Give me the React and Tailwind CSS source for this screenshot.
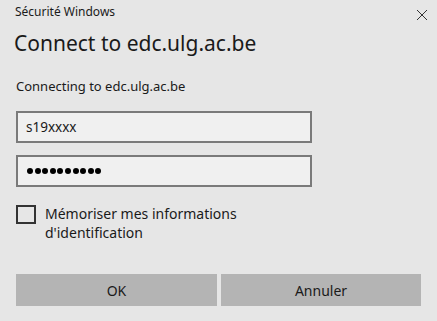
export default function App() {
  return (
    <div
      className="w-[437px] h-[321px] bg-[#e6e6e6] text-[#1a1a1a] overflow-hidden"
      style={{ fontFamily: '"Noto Sans", "Open Sans", sans-serif' }}
    >
      {/* title bar */}
      <div className="flex items-start justify-between pl-[15px] pr-[8px] pt-[3px]">
        <span className="text-[12px] leading-[18px]">Sécurité Windows</span>
        <svg width="12" height="12" viewBox="0 0 12 12" className="mt-[6px] mr-[1px]">
          <path d="M1 1 L11 11 M11 1 L1 11" stroke="#333" strokeWidth="1" />
        </svg>
      </div>

      <h1 className="pl-[14px] mt-[8px] text-[21px] leading-[28px]">Connect to edc.ulg.ac.be</h1>

      <p className="pl-[16px] mt-[20px] text-[13px] leading-[18px]">Connecting to edc.ulg.ac.be</p>

      <div className="pl-[16px] mt-[16px] flex flex-col gap-[12px]">
        <div className="w-[296px] h-[32px] border-2 border-[#7a7a7a] bg-[#f0f0f0] flex items-center pl-[8px] text-[13.5px]">
          s19xxxx
        </div>
        <div className="w-[296px] h-[32px] border-2 border-[#7a7a7a] bg-[#f0f0f0] flex items-center pl-[9px] gap-[1.6px]">
          {Array.from({ length: 10 }).map((_, i) => (
            <span key={i} className="w-[6px] h-[6px] rounded-full bg-black" />
          ))}
        </div>
      </div>

      <div className="pl-[16px] mt-[17px] flex items-start gap-[9px]">
        <div className="w-[20px] h-[19px] border-2 border-[#333333] mt-[1px]" />
        <span className="text-[14px] leading-[19px] w-[200px]">
          Mémoriser mes informations d'identification
        </span>
      </div>

      <div className="pl-[16px] mt-[32px] flex gap-[4px]">
        <button className="w-[201px] h-[32px] bg-[#b4b4b4] text-[14px]">OK</button>
        <button className="w-[200px] h-[32px] bg-[#b4b4b4] text-[14px]">Annuler</button>
      </div>
    </div>
  );
}
